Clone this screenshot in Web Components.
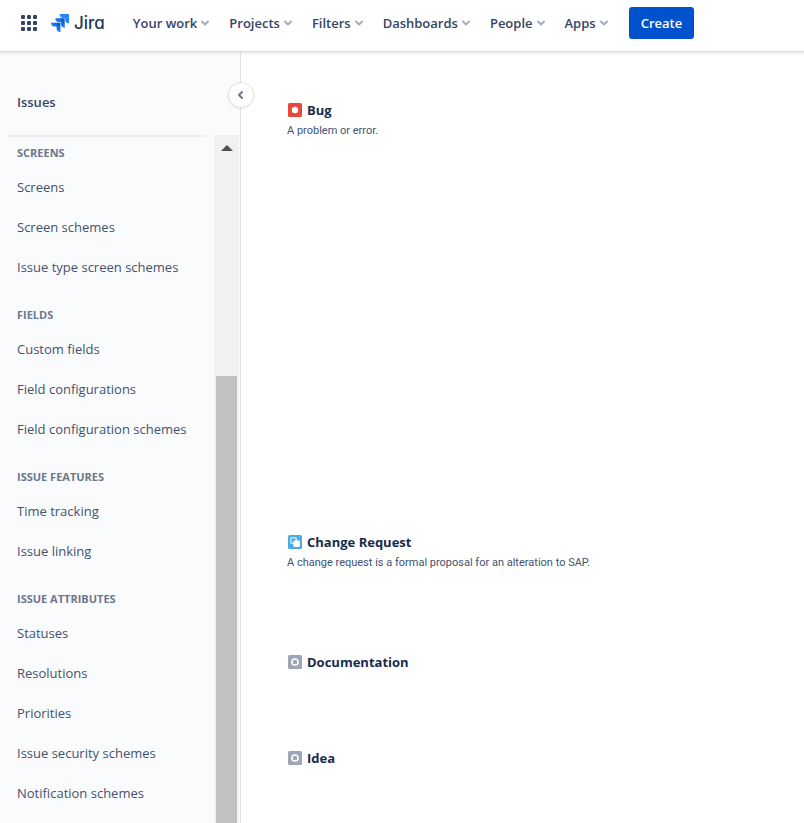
<!DOCTYPE html>
<html lang="en">
<head>
<meta charset="utf-8">
<title>Issue types - Jira</title>
<style>
  body {
    margin: 0;
    min-height: 100vh;
    display: flex;
    flex-direction: column;
    background: #fff;
    color: #344563;
    font: 14px/20px "Open Sans", "Noto Sans", sans-serif;
  }
  .page {
    flex: 1;
    display: flex;
  }
</style>
</head>
<body>

<template id="tmp-top-nav">
  <style>
    :host {
      display: block;
      position: relative;
      z-index: 2;
      background: #fff;
      box-shadow: 0 1px 1px #d9dbe3, 0 2px 4px #091e421a;
    }
    header {
      display: flex;
      align-items: center;
      height: 51px;
      box-sizing: border-box;
      padding: 0 20px 5px;
    }
    .switcher {
      display: flex;
      padding: 0;
      border: 0;
      background: none;
      cursor: pointer;
    }
    .logo {
      display: flex;
      align-items: center;
      gap: 5px;
      margin: 0 28px 0 13px;
      color: #253858;
      font: 500 17px/24px Inter, sans-serif;
      font-feature-settings: "cv11";
      text-decoration: none;
    }
    nav {
      display: flex;
      gap: 19px;
    }
  </style>
  <header>
    <button class="switcher" aria-label="Switch to another product">
      <svg width="18" height="18" viewBox="0 0 18 18" fill="#344563">
        <rect x="1" y="1" width="4" height="4" rx="1"/><rect x="7" y="1" width="4" height="4" rx="1"/><rect x="13" y="1" width="4" height="4" rx="1"/>
        <rect x="1" y="7" width="4" height="4" rx="1"/><rect x="7" y="7" width="4" height="4" rx="1"/><rect x="13" y="7" width="4" height="4" rx="1"/>
        <rect x="1" y="13" width="4" height="4" rx="1"/><rect x="7" y="13" width="4" height="4" rx="1"/><rect x="13" y="13" width="4" height="4" rx="1"/>
      </svg>
    </button>
    <a class="logo" href="#home">
      <svg width="18" height="18" viewBox="0 0 18 18">
        <defs>
          <linearGradient id="fade" x1="1" y1="0" x2="0.4" y2="0.6">
            <stop offset="0.18" stop-color="#0052cc"/>
            <stop offset="1" stop-color="#2684ff"/>
          </linearGradient>
        </defs>
        <path fill="#2684ff" d="M17.4 0H8.7a3.9 3.9 0 0 0 3.9 3.9h1.6v1.6a3.9 3.9 0 0 0 3.8 3.9V.6a.6.6 0 0 0-.6-.6z"/>
        <path fill="url(#fade)" d="M13 4.3H4.4a3.9 3.9 0 0 0 3.9 3.9h1.6v1.6a3.9 3.9 0 0 0 3.8 3.9V5a.6.6 0 0 0-.7-.7z"/>
        <path fill="url(#fade)" d="M8.7 8.7H0a3.9 3.9 0 0 0 3.9 3.9h1.6v1.5A3.9 3.9 0 0 0 9.4 18V9.3a.6.6 0 0 0-.7-.6z"/>
      </svg>
      <span>Jira</span>
    </a>
    <nav><slot></slot></nav>
    <slot name="action"></slot>
  </header>
</template>

<template id="tmp-nav-menu">
  <style>
    :host { display: block; }
    button {
      display: flex;
      align-items: center;
      gap: 3px;
      padding: 0;
      border: 0;
      background: none;
      color: #344563;
      font: 600 13px/20px "Open Sans", "Noto Sans", sans-serif;
      white-space: nowrap;
      cursor: pointer;
    }
    button:hover { color: #0052cc; }
  </style>
  <button aria-haspopup="true">
    <slot></slot>
    <svg width="10" height="8" viewBox="0 0 10 8" fill="none" stroke="#a5adba" stroke-width="2" stroke-linecap="round" stroke-linejoin="round"><path d="M2 2.5l3 3 3-3"/></svg>
  </button>
</template>

<template id="tmp-create-button">
  <style>
    :host {
      display: block;
      margin-left: 20px;
    }
    button {
      height: 32px;
      padding: 0 12px;
      border: 0;
      border-radius: 3px;
      background: #0052cc;
      color: #fff;
      font: 600 13px/32px "Open Sans", "Noto Sans", sans-serif;
      cursor: pointer;
    }
    button:hover { background: #0065ff; }
  </style>
  <button><slot></slot></button>
</template>

<template id="tmp-side-bar">
  <style>
    :host {
      display: flex;
      flex-direction: column;
      position: relative;
      flex: none;
      width: 240px;
      border-right: 1px solid #e3e4e8;
      background: #fafbfc;
    }
    h2 {
      margin: 0;
      padding: 41px 17px 23px;
      font: 600 13px/20px "Open Sans", "Noto Sans", sans-serif;
    }
    .scroller {
      flex: 1;
      display: flex;
      justify-content: space-between;
    }
    .groups {
      flex: 1;
      margin: 0 8px;
      border-top: 2px solid #ebecf0;
    }
    .track {
      width: 21px;
      display: flex;
      flex-direction: column;
      padding: 0 2px;
      margin-right: 1px;
      background: #f1f1f1;
    }
    .track svg {
      display: block;
      margin: 10px auto 0;
    }
    .thumb {
      flex: 1;
      margin-top: 225px;
      background: #c1c1c1;
    }
    /* the collapse handle sits over the bar's edge */
    .collapse {
      position: absolute;
      top: 32px;
      right: -13px;
      display: flex;
      align-items: center;
      justify-content: center;
      width: 24px;
      height: 24px;
      padding: 0;
      border: 0;
      border-radius: 50%;
      background: #fff;
      box-shadow: 0 0 0 1px #091e4214, 0 1px 3px 1px #091e4210;
      cursor: pointer;
    }
  </style>
  <h2><slot name="title"></slot></h2>
  <button class="collapse" aria-label="Collapse sidebar">
    <svg width="8" height="10" viewBox="0 0 8 10" fill="none" stroke="#6b778c" stroke-width="2" stroke-linecap="round" stroke-linejoin="round"><path d="M5 2L2 5l3 3"/></svg>
  </button>
  <div class="scroller">
    <div class="groups"><slot></slot></div>
    <div class="track">
      <svg width="12" height="6" viewBox="0 0 12 6" fill="#505050"><path d="M6 0l6 6H0z"/></svg>
      <div class="thumb"></div>
    </div>
  </div>
</template>

<template id="tmp-side-group">
  <style>
    :host {
      display: block;
      padding-top: 20px;
    }
    :host(:first-of-type) { padding-top: 8px; }
    h3 {
      margin: 0;
      padding: 0 9px 6px;
      color: #6b778c;
      font: 700 11px/16px "Open Sans", "Noto Sans", sans-serif;
      text-transform: uppercase;
    }
  </style>
  <h3></h3>
  <slot></slot>
</template>

<template id="tmp-side-link">
  <style>
    :host { display: block; }
    a {
      display: block;
      padding: 10px 9px;
      border-radius: 3px;
      color: #42526e;
      font: 13px/20px "Open Sans", "Noto Sans", sans-serif;
      text-decoration: none;
      white-space: nowrap;
    }
    a:hover { background: #ebecf0; }
  </style>
  <a href="#"><slot></slot></a>
</template>

<template id="tmp-issue-type">
  <style>
    :host { display: block; }
    h3 {
      display: flex;
      align-items: center;
      gap: 5px;
      margin: 0;
      color: #172b4d;
      font: 700 13px/20px "Open Sans", "Noto Sans", sans-serif;
    }
    .icon {
      display: flex;
      padding-left: 1px;
    }
    p {
      margin: 2px 0 0;
      color: #42526e;
      font: 11px/18px Roboto, "Open Sans", sans-serif;
    }
  </style>
  <h3><span class="icon"></span><span class="name"></span></h3>
  <p><slot></slot></p>
</template>

<template id="tmp-issue-list">
  <style>
    :host {
      flex: 1;
      display: grid;
      grid-template-rows: 432px 120px 96px auto;
      padding: 49px 24px 0 46px;
    }
  </style>
  <slot></slot>
</template>

<top-nav>
  <nav-menu>Your work</nav-menu>
  <nav-menu>Projects</nav-menu>
  <nav-menu>Filters</nav-menu>
  <nav-menu>Dashboards</nav-menu>
  <nav-menu>People</nav-menu>
  <nav-menu>Apps</nav-menu>
  <create-button slot="action">Create</create-button>
</top-nav>

<div class="page">
  <side-bar>
    <span slot="title">Issues</span>
    <side-group label="Screens">
      <side-link>Screens</side-link>
      <side-link>Screen schemes</side-link>
      <side-link>Issue type screen schemes</side-link>
    </side-group>
    <side-group label="Fields">
      <side-link>Custom fields</side-link>
      <side-link>Field configurations</side-link>
      <side-link>Field configuration schemes</side-link>
    </side-group>
    <side-group label="Issue features">
      <side-link>Time tracking</side-link>
      <side-link>Issue linking</side-link>
    </side-group>
    <side-group label="Issue attributes">
      <side-link>Statuses</side-link>
      <side-link>Resolutions</side-link>
      <side-link>Priorities</side-link>
      <side-link>Issue security schemes</side-link>
      <side-link>Notification schemes</side-link>
    </side-group>
  </side-bar>
  <issue-list>
    <issue-type icon="bug" name="Bug">A problem or error.</issue-type>
    <issue-type icon="change" name="Change Request">A change request is a formal proposal for an alteration to SAP.</issue-type>
    <issue-type icon="generic" name="Documentation"></issue-type>
    <issue-type icon="generic" name="Idea"></issue-type>
  </issue-list>
</div>

<script>
  (function() {
    let $ = (selector, node = document) => node.querySelector(selector);
    let icons = {
      bug: '<rect width="14" height="14" rx="1.5" fill="#e5493a"/><circle cx="7" cy="7" r="3.2" fill="#fff"/>',
      change: '<rect width="14" height="14" rx="1.5" fill="#4bade8"/><rect x="2.7" y="2.7" width="5.6" height="5.6" rx="1.4" fill="none" stroke="#c4e4f8" stroke-width="1.4"/><rect x="5.4" y="5.4" width="6.6" height="6.6" rx="1.4" fill="#fff"/>',
      generic: '<rect width="14" height="14" rx="1.5" fill="#9ba7b4"/><circle cx="7" cy="7" r="3.1" fill="none" stroke="#fff" stroke-width="1.5"/>'
    };

    class TemplateElement extends HTMLElement {
      constructor() {
        super();
        let template = $(`#tmp-${this.localName}`);
        this.attachShadow({mode: 'open'}).append(template.content.cloneNode(true));
      }
    }

    class SideGroup extends TemplateElement {
      connectedCallback() {
        $('h3', this.shadowRoot).textContent = this.getAttribute('label');
      }
    }

    class IssueType extends TemplateElement {
      connectedCallback() {
        let icon = icons[this.getAttribute('icon')];
        $('.icon', this.shadowRoot).innerHTML = `<svg width="14" height="14" viewBox="0 0 14 14">${icon}</svg>`;
        $('.name', this.shadowRoot).textContent = this.getAttribute('name');
      }
    }

    customElements.define('top-nav', class extends TemplateElement {});
    customElements.define('nav-menu', class extends TemplateElement {});
    customElements.define('create-button', class extends TemplateElement {});
    customElements.define('side-bar', class extends TemplateElement {});
    customElements.define('side-group', SideGroup);
    customElements.define('side-link', class extends TemplateElement {});
    customElements.define('issue-list', class extends TemplateElement {});
    customElements.define('issue-type', IssueType);
  })();
</script>
</body>
</html>
